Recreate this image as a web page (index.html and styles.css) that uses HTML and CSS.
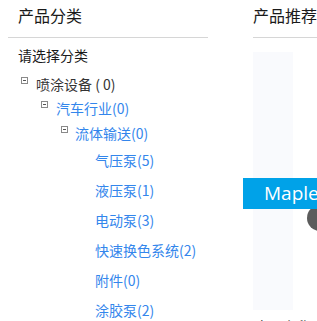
FILE: index.html
```html
<!DOCTYPE html>
<html lang="zh-CN">
<head>
<meta charset="utf-8">
<title>产品分类</title>
<link rel="stylesheet" href="styles.css">
</head>
<body>
<div class="page">
  <div class="left">
    <div class="hd">产品分类</div>
    <div class="tip">请选择分类</div>
    <ul class="tree">
      <li class="row lv1"><span class="ico"></span><span class="txt">喷涂设备 ( 0)</span></li>
      <li class="row lv2"><span class="ico"></span><a class="lnk">汽车行业(0)</a></li>
      <li class="row lv3"><span class="ico"></span><a class="lnk">流体输送(0)</a></li>
      <li class="row leaf"><a class="lnk">气压泵(5)</a></li>
      <li class="row leaf"><a class="lnk">液压泵(1)</a></li>
      <li class="row leaf"><a class="lnk">电动泵(3)</a></li>
      <li class="row leaf"><a class="lnk">快速换色系统(2)</a></li>
      <li class="row leaf"><a class="lnk">附件(0)</a></li>
      <li class="row leaf"><a class="lnk">涂胶泵(2)</a></li>
    </ul>
  </div>
  <div class="right">
    <div class="hd hd-r">产品推荐</div>
    <div class="pic"></div>
    <div class="name">产品名称 喷涂设备</div>
    <div class="dot"></div>
    <div class="badge">Maple</div>
  </div>
</div>
</body>
</html>
```
FILE: styles.css
```css
html, body {
  margin: 0;
  padding: 0;
  background: #fff;
}
body {
  font-family: "Noto Sans CJK SC", "Noto Sans", sans-serif;
  color: #333;
  overflow: hidden;
}
.page {
  width: 317px;
  height: 321px;
  overflow: hidden;
  display: flex;
  padding-left: 8px;
  box-sizing: border-box;
  position: relative;
}
.left {
  width: 200px;
  flex: none;
}
.hd {
  height: 37px;
  line-height: 30px;
  font-size: 16px;
  color: #1a1a1a;
  padding-left: 10px;
  border-bottom: 1px solid #d6d6d6;
}
.tip {
  height: 34px;
  line-height: 34px;
  font-size: 14px;
  color: #1a1a1a;
  padding-left: 10px;
}
.tree {
  list-style: none;
  margin: 0;
  padding: 0;
}
.row {
  display: flex;
  align-items: center;
  font-size: 14px;
  white-space: nowrap;
}
.lv1 { height: 24px; padding-left: 13px; }
.lv2 { height: 24px; padding-left: 33px; }
.lv3 { height: 25px; padding-left: 53px; }
.leaf { height: 30px; padding-left: 87px; }
.ico {
  width: 7px;
  height: 7px;
  box-sizing: border-box;
  border: 1px solid #8a8a8a;
  margin-right: 8px;
  margin-bottom: 7px;
  position: relative;
  flex: none;
}
.lv3 .ico { margin-right: 7px; }
.ico::after {
  content: "";
  position: absolute;
  left: 1px;
  right: 1px;
  top: 2px;
  height: 1px;
  background: #555;
}
.txt { color: #333; }
.lnk {
  color: #3386ec;
  text-decoration: none;
}
.right {
  margin-left: 45px;
  width: 320px;
  flex: none;
}
.hd-r {
  padding-left: 0;
}
.pic {
  margin-top: 14px;
  width: 40px;
  height: 258px;
  background: #f9fafd;
}
.name {
  margin-top: 7px;
  padding-left: 2px;
  font-size: 14px;
  line-height: 18px;
  color: #222;
  white-space: nowrap;
}
.badge {
  position: absolute;
  left: 243px;
  top: 178px;
  width: 100px;
  height: 31px;
  line-height: 31px;
  padding-left: 21px;
  box-sizing: border-box;
  background: #00a2e8;
  color: #fff;
  font-family: "Open Sans", "Noto Sans", sans-serif;
  font-size: 19px;
  white-space: nowrap;
  z-index: 2;
}
.dot {
  position: absolute;
  left: 307px;
  top: 205px;
  width: 26px;
  height: 26px;
  border-radius: 50%;
  background: #5c5c5c;
  z-index: 1;
}
```
